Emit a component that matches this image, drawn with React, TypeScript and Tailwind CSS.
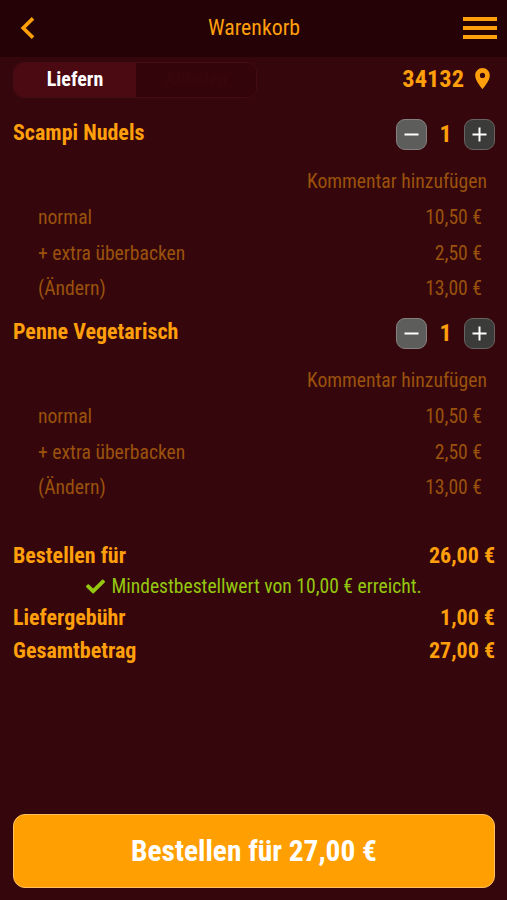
import React from 'react';
import { FaCheck } from 'react-icons/fa';
import { MdLocationOn } from 'react-icons/md';

interface Extra {
  label: string;
  price: string;
}

interface CartItem {
  name: string;
  count: number;
  extras: Extra[];
}

const items: CartItem[] = [
  {
    name: 'Scampi Nudels',
    count: 1,
    extras: [
      { label: 'normal', price: '10,50 €' },
      { label: '+ extra überbacken', price: '2,50 €' },
      { label: '(Ändern)', price: '13,00 €' },
    ],
  },
  {
    name: 'Penne Vegetarisch',
    count: 1,
    extras: [
      { label: 'normal', price: '10,50 €' },
      { label: '+ extra überbacken', price: '2,50 €' },
      { label: '(Ändern)', price: '13,00 €' },
    ],
  },
];

function Header() {
  return (
    <header className="flex h-[57px] items-center justify-between bg-[#240206] pb-px pl-5 pr-[10px]">
      <button className="w-[25px]" aria-label="Zurück">
        <svg width="15" height="22" viewBox="0 0 15 22" fill="none" stroke="#ff9f0c" strokeWidth="3.6">
          <path d="M13 1.4 3.2 11 13 20.6" />
        </svg>
      </button>
      <h1 className="text-[21.8px] leading-[26px]">Warenkorb</h1>
      <button className="flex w-[34px] flex-col gap-[5px]" aria-label="Menü">
        <span className="h-1 bg-[#ff9f0c]" />
        <span className="h-1 bg-[#ff9f0c]" />
        <span className="h-1 bg-[#ff9f0c]" />
      </button>
    </header>
  );
}

function DeliveryBar() {
  return (
    <div className="flex h-[45px] items-center justify-between pl-[13px] pr-3">
      <div className="flex h-9 w-[244px] overflow-hidden rounded-[10px] border border-[#440c13] text-[20px] font-bold">
        <button className="w-[122px] bg-[#4b0a12] pb-px text-white">Liefern</button>
        <button className="flex-1 bg-[#330409] text-[19px] text-[#37060a]">Abholen</button>
      </div>
      <div className="flex items-center gap-[6px] text-[24.4px] font-bold">
        34132
        <MdLocationOn size={25} className="mb-px" />
      </div>
    </div>
  );
}

function Stepper({ count }: { count: number }) {
  return (
    <div className="flex items-center text-[24px] font-bold">
      <button className="flex h-[31px] w-[31px] items-center justify-center rounded-[9px] border border-[#85807f] bg-[#5d5d5c]" aria-label="Weniger">
        <svg width="15" height="15" stroke="white" strokeWidth="2">
          <path d="M0.5 7.5h14" />
        </svg>
      </button>
      <span className="w-[37px] text-center leading-[33px]">{count}</span>
      <button className="flex h-[31px] w-[31px] items-center justify-center rounded-[9px] border border-[#686362] bg-[#3b3b3a]" aria-label="Mehr">
        <svg width="15" height="15" stroke="white" strokeWidth="2">
          <path d="M0.5 7.5h14M7.5 0.5v14" />
        </svg>
      </button>
    </div>
  );
}

function CartRow({ item }: { item: CartItem }) {
  return (
    <section className="h-[199px] pl-[13px] pr-3">
      <div className="flex h-[61px] items-start justify-between pt-4">
        <h2 className="text-[22px] font-bold leading-[29px]">{item.name}</h2>
        <Stepper count={item.count} />
      </div>
      <div className="pl-[25px] text-[19.65px] text-[#9a520d]">
        <div className="h-[37px] pr-2 text-right leading-[37px]">Kommentar hinzufügen</div>
        {item.extras.map(extra => (
          <div key={extra.label} className="flex h-[35.5px] justify-between pr-[13px] leading-[36px]">
            <span>{extra.label}</span>
            <span>{extra.price}</span>
          </div>
        ))}
      </div>
    </section>
  );
}

function TotalRow({ label, price }: { label: string; price: string }) {
  return (
    <div className="flex h-8 items-center justify-between text-[22px] font-bold">
      <span>{label}</span>
      <span>{price}</span>
    </div>
  );
}

export default function App() {
  return (
    <div className="flex h-[900px] w-[507px] flex-col overflow-hidden bg-[#35060b] font-['Roboto_Condensed',Roboto,sans-serif] text-[#ff9f0c] [font-stretch:condensed]">
      <Header />
      <DeliveryBar />
      {items.map(item => (
        <CartRow key={item.name} item={item} />
      ))}
      <div className="mt-[39px] pl-[13px] pr-3">
        <TotalRow label="Bestellen für" price="26,00 €" />
        <div className="flex h-[30px] items-center justify-center gap-[6px] text-[19.6px] text-[#94c810]">
          <FaCheck size={19} />
          <span className="pt-[2px]">Mindestbestellwert von 10,00 € erreicht.</span>
        </div>
        <TotalRow label="Liefergebühr" price="1,00 €" />
        <div className="pt-px">
          <TotalRow label="Gesamtbetrag" price="27,00 €" />
        </div>
      </div>
      <div className="mt-auto pb-3 pl-[13px] pr-3">
        <button className="h-[74px] w-full rounded-[12px] border border-[#ffc062] bg-[#ff9f02] text-[29.4px] font-bold text-white">
          Bestellen für 27,00 €
        </button>
      </div>
    </div>
  );
}
